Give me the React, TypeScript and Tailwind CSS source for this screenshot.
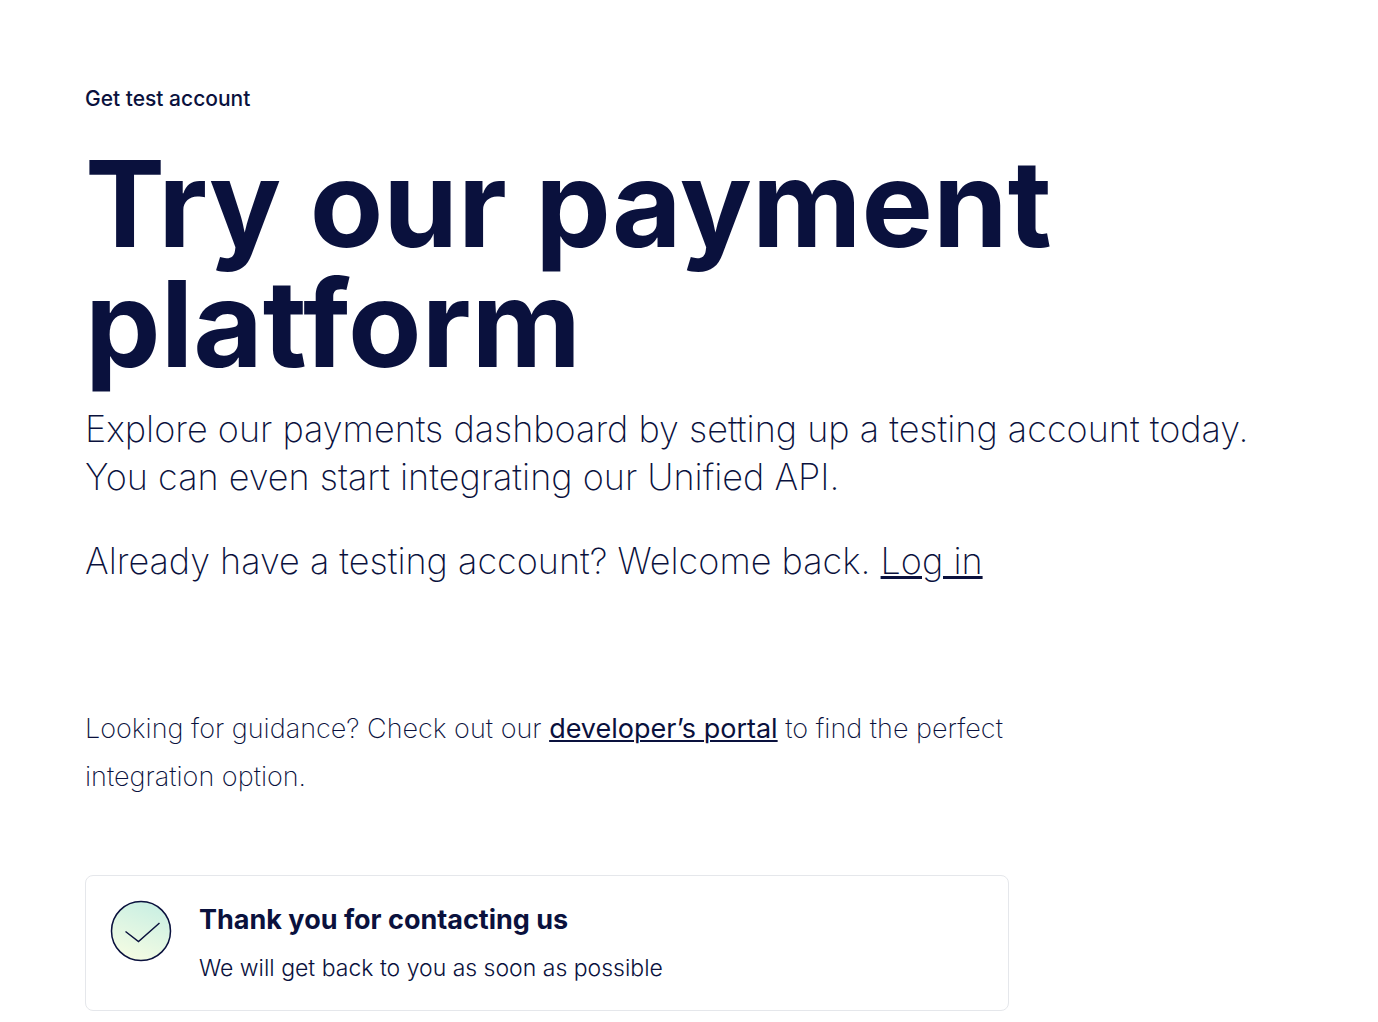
export default function App() {
  return (
    <main className="min-h-screen bg-white px-[85px] pt-[84px] pb-3 font-['Inter',sans-serif] text-[#0a113d]">
      <header>
        <p className="text-[21px] leading-[30px] font-medium">Get test account</p>
        <h1 className="mt-[30px] max-w-[1040px] text-[120px] leading-[120px] font-bold">
          Try our payment platform
        </h1>
        <div className="mt-[21px] text-[36px] leading-[48px] font-extralight">
          <p>
            Explore our payments dashboard by setting up a testing account today.
            <br />
            You can even start integrating our Unified API.
          </p>
          <p className="mt-9">
            Already have a testing account? Welcome back.{" "}
            <a href="#login" className="underline decoration-3 underline-offset-2">
              Log in
            </a>
          </p>
        </div>
      </header>

      <section className="mt-[120px] max-w-[924px]">
        <p className="text-[27px] leading-[48px] font-extralight">
          Looking for guidance? Check out our{" "}
          <a href="#developers" className="font-normal underline decoration-2 underline-offset-2">
            developer’s portal
          </a>{" "}
          to find the perfect integration option.
        </p>

        <div className="mt-[74px] flex gap-[27px] rounded-lg border border-gray-200 p-6">
          <svg className="size-[62px] shrink-0" viewBox="0 0 62 62" fill="none" aria-hidden="true">
            <defs>
              <linearGradient id="badge" x1="42" y1="2" x2="20" y2="60" gradientUnits="userSpaceOnUse">
                <stop stopColor="#c9efe3" />
                <stop offset="1" stopColor="#f5fce3" />
              </linearGradient>
            </defs>
            <circle cx="31" cy="31" r="29.5" fill="url(#badge)" stroke="#0a113d" strokeWidth="1.5" />
            <path d="M15.5 31.5 28.5 41.5 49.5 23" stroke="#0a113d" strokeWidth="1.5" />
          </svg>
          <div>
            <h2 className="text-[27px] leading-[40px] font-bold">Thank you for contacting us</h2>
            <p className="mt-[10px] text-[23px] leading-9 font-light">
              We will get back to you as soon as possible
            </p>
          </div>
        </div>
      </section>
    </main>
  );
}
